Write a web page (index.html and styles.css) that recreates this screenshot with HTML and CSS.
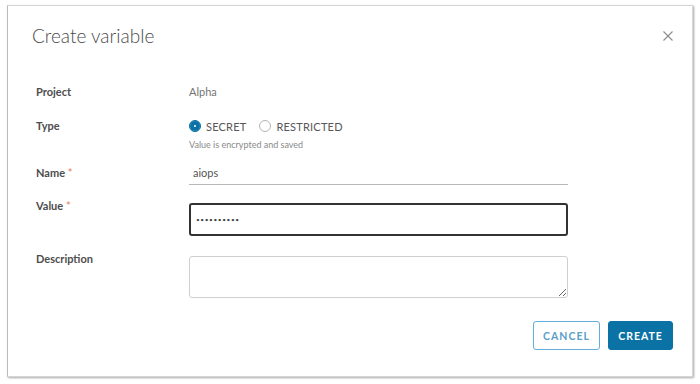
FILE: index.html
```html
<!DOCTYPE html>
<html lang="en">
<head>
  <meta charset="UTF-8" />
  <title>Create variable</title>
  <link rel="stylesheet" href="styles.css">
</head>
<body>
  <div class="modal">
    <header class="modal-header">
      <h1>Create variable</h1>
      <button class="close" aria-label="Close">
        <svg width="10" height="10" viewBox="0 0 10 10"><path d="M0.5 0.5 L9.5 9.5 M9.5 0.5 L0.5 9.5" stroke="#8c8c8c" stroke-width="1.1" fill="none"/></svg>
      </button>
    </header>

    <form class="form">
      <div class="row row-project">
        <label>Project</label>
        <span class="static">Alpha</span>
      </div>

      <div class="row row-type">
        <label>Type</label>
        <div>
          <div class="radios">
            <span class="radio checked"></span><span class="radio-text">SECRET</span>
            <span class="radio"></span><span class="radio-text">RESTRICTED</span>
          </div>
          <div class="helper">Value is encrypted and saved</div>
        </div>
      </div>

      <div class="row row-name">
        <label>Name <span class="req">*</span></label>
        <input class="line-input" type="text" value="aiops" readonly>
      </div>

      <div class="row row-value">
        <label>Value <span class="req">*</span></label>
        <input class="box-input" type="password" value="secretpass" readonly>
      </div>

      <div class="row row-desc">
        <label>Description</label>
        <textarea class="area"></textarea>
      </div>

      <div class="footer">
        <button type="button" class="btn btn-outline">CANCEL</button>
        <button type="button" class="btn btn-primary">CREATE</button>
      </div>
    </form>
  </div>
</body>
</html>
```

FILE: styles.css
```css
* {
  box-sizing: border-box;
  margin: 0;
  padding: 0;
  font-family: 'Lato', 'Open Sans', sans-serif;
}

body {
  background: #ffffff;
  width: 700px;
  height: 384px;
  overflow: hidden;
}

.modal {
  margin: 5px 0 0 7px;
  width: 686px;
  height: 372px;
  background: #fff;
  border: 1px solid #d6d6d6;
  border-left-color: #bdbdbd;
  box-shadow: 1px 1px 2px rgba(0, 0, 0, 0.35);
  padding: 17px 19px 0 24px;
}

.modal-header {
  display: flex;
  justify-content: space-between;
  align-items: center;
  height: 26px;
}

.modal-header h1 {
  font-size: 19px;
  font-weight: 300;
  color: #4a4a4a;
  line-height: 26px;
}

.close {
  border: none;
  background: none;
  width: 10px;
  height: 10px;
  display: flex;
}

.form {
  padding-left: 4px;
  margin-top: 36px;
}

.row {
  display: grid;
  grid-template-columns: 153px 379px;
}

.row label {
  font-size: 11px;
  line-height: 14px;
  font-weight: 700;
  color: #4d4d4d;
}

.req {
  color: #e57a5a;
  font-weight: 400;
}

.static {
  font-size: 11px;
  line-height: 14px;
  color: #737373;
}

.row-type {
  margin-top: 20px;
}

.radios {
  display: flex;
  align-items: center;
  height: 14px;
}

.radio {
  width: 12px;
  height: 12px;
  border-radius: 50%;
  border: 1px solid #b5b5b5;
  margin-right: 5px;
}

.radio.checked {
  background: #0b72a5;
  border-color: #0b72a5;
  box-shadow: inset 0 0 0 4px #0b72a5, inset 0 0 0 6px #fff;
}

.radio-text {
  font-size: 11px;
  letter-spacing: 0.2px;
  color: #575757;
  margin-right: 13px;
}

.helper {
  margin-top: 6px;
  font-size: 9px;
  line-height: 12px;
  color: #8a8a8a;
}

.row-name {
  margin-top: 10px;
  align-items: center;
}

.line-input {
  height: 24px;
  border: none;
  border-bottom: 1px solid #b8b8b8;
  font-size: 11px;
  color: #555;
  padding: 0 4px;
  outline: none;
}

.row-value {
  margin-top: 14px;
}

.box-input {
  margin-top: 4px;
  height: 33px;
  border: 2px solid #333;
  border-radius: 3px;
  font-size: 6.5px;
  letter-spacing: 0.6px;
  color: #444;
  padding: 0 5px;
  outline: none;
}

.row-desc {
  margin-top: 16px;
}

.area {
  margin-top: 4px;
  height: 42px;
  border: 1px solid #cfcfcf;
  border-radius: 3px;
  resize: both;
  outline: none;
}

.footer {
  display: flex;
  justify-content: flex-end;
  gap: 8px;
  margin-top: 23px;
}

.btn {
  height: 29px;
  border-radius: 3px;
  font-size: 10.5px;
  font-weight: 700;
  letter-spacing: 1px;
}

.btn-outline {
  width: 67px;
  background: #fff;
  border: 1px solid #63aedb;
  color: #5a9fc8;
}

.btn-primary {
  width: 65px;
  background: #0b72a5;
  border: 1px solid #0b72a5;
  color: #fff;
}
```
